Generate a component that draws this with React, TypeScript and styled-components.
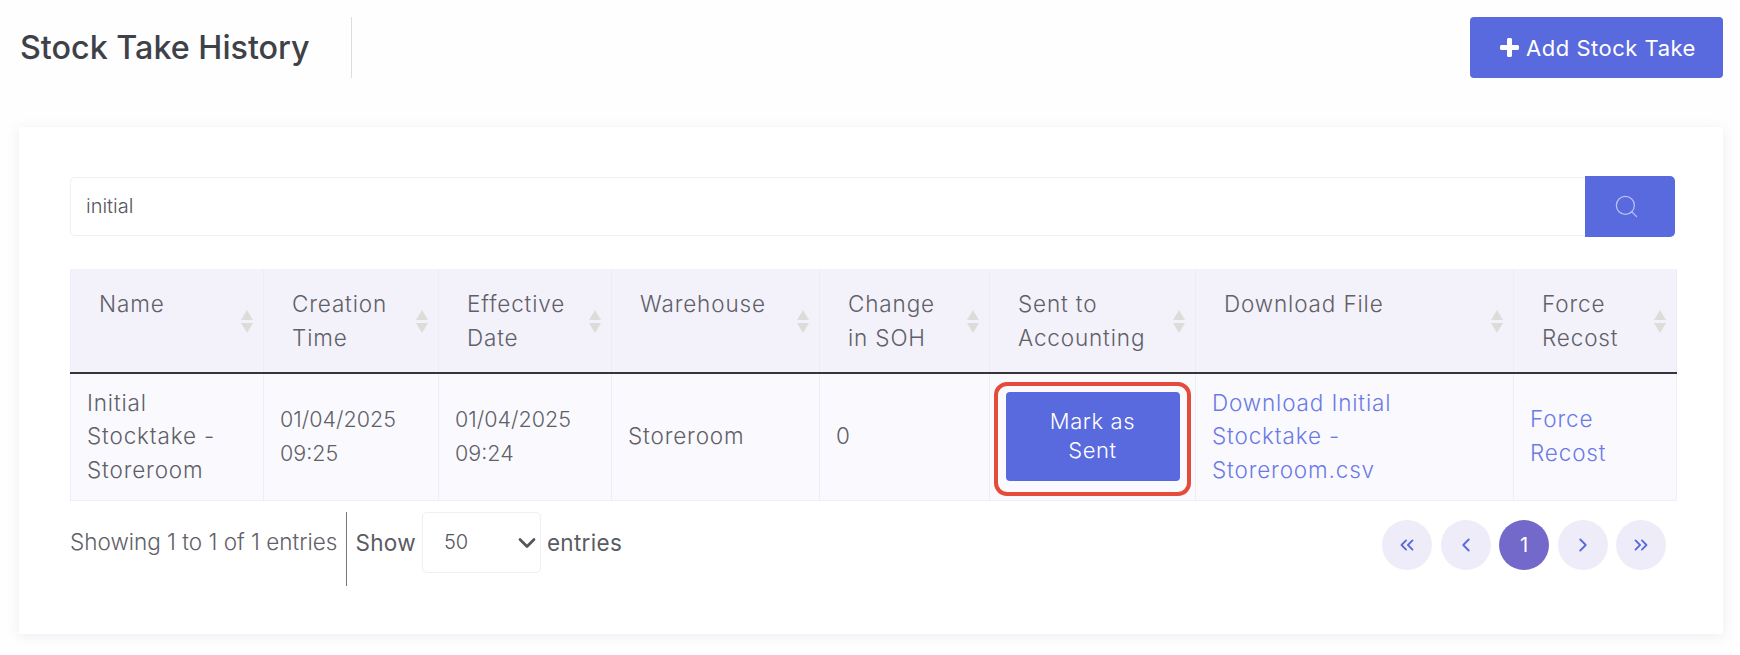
import { FC } from "react";
import styled, { createGlobalStyle } from "styled-components";
import {
  ChevronDown,
  ChevronLeft,
  ChevronRight,
  ChevronsLeft,
  ChevronsRight,
  Search,
} from "lucide-react";

const GlobalStyle = createGlobalStyle`
  html, body {
    margin: 0;
    background: #fefefe;
    overflow: hidden;
  }
  body {
    font-family: "Inter", "Liberation Sans", sans-serif;
    font-weight: 300;
    color: #5f6068;
  }
`;

const Page = styled.div`
  padding: 17px 17px 0 19px;
  box-sizing: border-box;
  height: 655px;
`;

const TopBar = styled.div`
  display: flex;
  align-items: center;
  justify-content: space-between;
  margin-left: 1px;
  margin-bottom: 49px;
`;

const TitleGroup = styled.div`
  display: flex;
  align-items: center;
  height: 61px;
`;

const Title = styled.h1`
  margin: 0;
  padding-right: 41px;
  height: 61px;
  line-height: 62px;
  font-size: 32.3px;
  font-weight: 500;
  color: #3f4149;
  border-right: 1px solid #dcdce2;
`;

const AddButton = styled.button`
  display: flex;
  align-items: center;
  justify-content: center;
  gap: 7px;
  width: 253px;
  height: 61px;
  padding: 0 0 0 3px;
  border: 0;
  border-radius: 4px;
  background: #5969de;
  color: #fff;
  font-family: inherit;
  font-size: 22px;
  letter-spacing: 0.5px;
  font-weight: 400;
`;

const Card = styled.div`
  height: 507px;
  box-sizing: border-box;
  padding: 49px 46px 0 51px;
  background: #fff;
  box-shadow: 0 2px 12px rgba(90, 90, 150, 0.1);
`;

const SearchRow = styled.div`
  display: flex;
  width: 1605px;
  height: 61px;
  margin-bottom: 32px;
`;

const SearchInput = styled.input`
  flex: 1;
  min-width: 0;
  margin: 1px 0;
  box-sizing: border-box;
  padding: 0 15px 2px;
  border: 1px solid #eeeef5;
  border-right: 0;
  border-radius: 5px 0 0 5px;
  background: #fff;
  outline: none;
  font-family: inherit;
  font-size: 20px;
  font-weight: 300;
  color: #55565e;
`;

const SearchButton = styled.button`
  display: flex;
  align-items: center;
  justify-content: center;
  width: 90px;
  padding: 0 8px 0 0;
  border: 0;
  border-radius: 0 5px 5px 0;
  background: #5969de;
  color: #b9c1f3;
`;

const Table = styled.table`
  width: 1606px;
  table-layout: fixed;
  border-collapse: collapse;
  font-size: 22.5px;
  letter-spacing: 0.85px;
  line-height: 33.5px;
`;

const HeadCell = styled.th`
  height: 104px;
  padding: 0 10px 0 28px;
  box-sizing: border-box;
  background: #f3f2fb;
  border-left: 1px solid #eeedf6;
  border-right: 1px solid #eeedf6;
  border-bottom: 2px solid #35353b;
  font-weight: 300;
  text-align: left;
  color: #5f6068;
`;

const HeadInner = styled.div`
  display: flex;
  align-items: flex-start;
  justify-content: space-between;
  gap: 6px;
  min-height: 67px;
`;

const Cell = styled.td<{ $numeric?: boolean }>`
  height: 127px;
  padding: 0 16px ${(p) => (p.$numeric ? "0" : "2px")};
  box-sizing: border-box;
  background: #fafafe;
  border: 1px solid #eeedf8;
  letter-spacing: ${(p) => (p.$numeric ? "0" : "inherit")};
  font-size: ${(p) => (p.$numeric ? "21.5px" : "inherit")};
`;

const ActionCell = styled(Cell)`
  position: relative;
  padding: 0;
`;

const MarkButton = styled.button`
  display: block;
  width: 174px;
  height: 89px;
  margin: 0 auto;
  padding: 0 30px 2px;
  border: 0;
  border-radius: 4px;
  background: #5969de;
  color: #fff;
  font-family: inherit;
  font-size: 22px;
  letter-spacing: 0.6px;
  line-height: 29px;
  font-weight: 300;
`;

const Highlight = styled.span`
  position: absolute;
  left: 4px;
  right: 4px;
  top: 8px;
  bottom: 4px;
  border: 4px solid #e54b3a;
  border-radius: 13px;
  pointer-events: none;
`;

const FileLink = styled.a`
  color: #6c7ae6;
`;

const Footer = styled.div`
  display: flex;
  align-items: center;
  justify-content: space-between;
  width: 1606px;
  margin-top: 11px;
`;

const Info = styled.div`
  display: flex;
  align-items: center;
  font-size: 22.5px;
`;

const Showing = styled.span`
  padding: 0 9px 0 0;
  height: 74px;
  line-height: 59px;
  border-right: 1px solid #77787e;
`;

const Length = styled.label`
  display: flex;
  align-items: center;
  gap: 6px;
  margin-left: 8px;
  margin-bottom: 12px;
  font-weight: 400;
  letter-spacing: 0.3px;
  color: #5a5b63;
`;

const SelectWrap = styled.span`
  position: relative;
  display: block;
  width: 119px;
  height: 61px;
`;

const PageSelect = styled.select`
  display: block;
  width: 100%;
  height: 100%;
  padding: 0 0 2px 21px;
  appearance: none;
  border: 1px solid #eeeef5;
  border-radius: 5px;
  background: #fff;
  outline: none;
  font-family: inherit;
  font-size: 20px;
  font-weight: 300;
  color: #55565e;
`;

const SelectArrow = styled(ChevronDown)`
  position: absolute;
  top: 17px;
  right: 0;
  color: #55565e;
  pointer-events: none;
`;

const Pager = styled.div`
  display: flex;
  gap: 8.5px;
  margin-right: 10px;
  margin-bottom: 7px;
`;

const PageButton = styled.button<{ $active?: boolean }>`
  display: flex;
  align-items: center;
  justify-content: center;
  width: 50px;
  height: 50px;
  padding: 0;
  border: 0;
  border-radius: 50%;
  background: ${(p) => (p.$active ? "#7269ca" : "#eeecf9")};
  color: ${(p) => (p.$active ? "#fff" : "#5969de")};
  font-family: inherit;
  font-size: 20px;
  font-weight: 400;
`;

const SortSvg = styled.svg`
  flex: none;
  align-self: center;
  margin-top: 2px;
`;

const SortIcon: FC = () => (
  <SortSvg width="12" height="23" viewBox="0 0 12 23">
    <path d="M6 0 L12 10 H0 Z M0 13 H12 L6 23 Z" fill="#dcdcd8" />
  </SortSvg>
);

const COLUMNS = [
  { label: "Name", width: 193 },
  { label: "Creation Time", width: 175 },
  { label: "Effective Date", width: 173 },
  { label: "Warehouse", width: 208 },
  { label: "Change in SOH", width: 170 },
  { label: "Sent to Accounting", width: 206 },
  { label: "Download File", width: 318 },
  { label: "Force Recost", width: 163 },
];

export default function App() {
  return (
    <>
      <GlobalStyle />
      <Page>
        <TopBar>
          <TitleGroup>
            <Title>Stock Take History</Title>
          </TitleGroup>
          <AddButton>
            <svg width="19" height="19" viewBox="0 0 19 19">
              <path d="M7 1.5C7 .7 7.7 0 8.5 0h2c.8 0 1.500.7 1.500 1.500V7h5.500c.8 0 1.500.7 1.500 1.500v2c0 .8-.7 1.500-1.500 1.500H12v5.500c0 .8-.7 1.500-1.500 1.500h-2C7.700 19 7 18.300 7 17.500V12H1.500C.7 12 0 11.300 0 10.500v-2C0 7.700.7 7 1.500 7H7z" fill="#fff" />
            </svg>
            Add Stock Take
          </AddButton>
        </TopBar>
        <Card>
          <SearchRow>
            <SearchInput defaultValue="initial" />
            <SearchButton>
              <Search size={27} strokeWidth={1.1} />
            </SearchButton>
          </SearchRow>
          <Table>
            <colgroup>
              {COLUMNS.map((c) => (
                <col key={c.label} width={c.width} />
              ))}
            </colgroup>
            <thead>
              <tr>
                {COLUMNS.map((c) => (
                  <HeadCell key={c.label}>
                    <HeadInner>
                      <span>{c.label}</span>
                      <SortIcon />
                    </HeadInner>
                  </HeadCell>
                ))}
              </tr>
            </thead>
            <tbody>
              <tr>
                <Cell>Initial Stocktake - Storeroom</Cell>
                <Cell $numeric>01/04/2025 09:25</Cell>
                <Cell $numeric>01/04/2025 09:24</Cell>
                <Cell>Storeroom</Cell>
                <Cell>0</Cell>
                <ActionCell>
                  <MarkButton>Mark as Sent</MarkButton>
                  <Highlight />
                </ActionCell>
                <Cell>
                  <FileLink>Download Initial Stocktake - Storeroom.csv</FileLink>
                </Cell>
                <Cell>
                  <FileLink>Force Recost</FileLink>
                </Cell>
              </tr>
            </tbody>
          </Table>
          <Footer>
            <Info>
              <Showing>Showing 1 to 1 of 1 entries</Showing>
              <Length>
                Show
                <SelectWrap>
                  <PageSelect defaultValue="50">
                    <option value="10">10</option>
                    <option value="50">50</option>
                    <option value="100">100</option>
                  </PageSelect>
                  <SelectArrow size={28} strokeWidth={2.4} />
                </SelectWrap>
                entries
              </Length>
            </Info>
            <Pager>
              <PageButton>
                <ChevronsLeft size={22} strokeWidth={2} />
              </PageButton>
              <PageButton>
                <ChevronLeft size={22} strokeWidth={2} />
              </PageButton>
              <PageButton $active>1</PageButton>
              <PageButton>
                <ChevronRight size={22} strokeWidth={2} />
              </PageButton>
              <PageButton>
                <ChevronsRight size={22} strokeWidth={2} />
              </PageButton>
            </Pager>
          </Footer>
        </Card>
      </Page>
    </>
  );
}
